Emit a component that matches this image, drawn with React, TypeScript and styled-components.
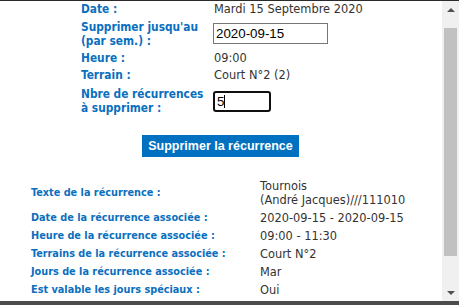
import styled, { createGlobalStyle } from 'styled-components';

const GlobalStyle = createGlobalStyle`
  html, body {
    margin: 0;
    padding: 0;
    background: #ffffff;
  }
`;

type DetailType = {
  label: string;
  value: string[];
};

const DETAILS: DetailType[] = [
  { label: 'Texte de la récurrence :', value: ['Tournois', '(André Jacques)///111010'] },
  { label: 'Date de la récurrence associée :', value: ['2020-09-15 - 2020-09-15'] },
  { label: 'Heure de la récurrence associée :', value: ['09:00 - 11:30'] },
  { label: 'Terrains de la récurrence associée :', value: ['Court N°2'] },
  { label: 'Jours de la récurrence associée :', value: ['Mar'] },
  { label: 'Est valable les jours spéciaux :', value: ['Oui'] },
];

export default function App() {
  return (
    <>
      <GlobalStyle />
      <Frame>
        <Body>
          <Content>
            <FormRow $height={15}>
              <Label>Date :</Label>
              <Value>Mardi 15 Septembre 2020</Value>
            </FormRow>

            <FormRow $height={35}>
              <Label>
                Supprimer jusqu'au
                <br />
                (par sem.) :
              </Label>
              <DateInput defaultValue="2020-09-15" />
            </FormRow>

            <FormRow $height={14}>
              <Label>Heure :</Label>
              <Value>09:00</Value>
            </FormRow>

            <FormRow $height={20}>
              <Label>Terrain :</Label>
              <Value>Court N°2 (2)</Value>
            </FormRow>

            <FormRow $height={32}>
              <Label>
                Nbre de récurrences
                <br />
                à supprimer :
              </Label>
              <CountWrap>
                <CountInput defaultValue="5" />
                <Caret />
              </CountWrap>
            </FormRow>

            <ButtonRow>
              <DeleteButton type="button">Supprimer la récurrence</DeleteButton>
            </ButtonRow>

            <DetailList>
              {DETAILS.map((d) => (
                <DetailRow key={d.label}>
                  <DetailLabel>{d.label}</DetailLabel>
                  <Value>
                    {d.value.map((line) => (
                      <div key={line}>{line}</div>
                    ))}
                  </Value>
                </DetailRow>
              ))}
            </DetailList>
          </Content>

          <Scrollbar>
            <Arrow $up />
            <Track>
              <Thumb />
            </Track>
            <Arrow />
          </Scrollbar>
        </Body>
        <BottomBar />
      </Frame>
    </>
  );
}

const Frame = styled.div`
  width: 459px;
  height: 305px;
  display: flex;
  flex-direction: column;
  border-top: 1px solid #2b2b2b;
  box-sizing: border-box;
  overflow: hidden;
`;

const Body = styled.div`
  flex: 1;
  display: flex;
  min-height: 0;
`;

const Content = styled.div`
  flex: 1;
  overflow: hidden;
  font-family: 'DejaVu Sans', Verdana, sans-serif;
  font-size: 11.4px;
  color: #333333;
`;

const FormRow = styled.div<{ $height: number }>`
  display: grid;
  grid-template-columns: 133px auto;
  align-items: center;
  height: ${(p) => p.$height}px;
  margin-left: 81px;
`;

const Label = styled.div`
  font-family: 'DejaVu Sans Condensed', 'DejaVu Sans', sans-serif;
  font-weight: bold;
  font-size: 11.8px;
  line-height: 14px;
  color: #0a6fbe;
  white-space: nowrap;
`;

const Value = styled.div`
  line-height: 14px;
  white-space: nowrap;
`;

const DateInput = styled.input`
  box-sizing: border-box;
  width: 115px;
  height: 21px;
  margin: 0 0 0 -1px;
  padding: 1px 2px;
  border: 1px solid #767676;
  border-radius: 0;
  font-family: 'Liberation Sans', Arial, sans-serif;
  font-size: 13.33px;
  color: #000000;
  outline: none;
`;

const CountWrap = styled.div`
  position: relative;
  display: flex;
`;

const CountInput = styled.input`
  box-sizing: border-box;
  width: 58px;
  height: 21px;
  margin: 0 0 0 -1px;
  padding: 1px 2px;
  border: 2px solid #101010;
  border-radius: 3px;
  font-family: 'Liberation Sans', Arial, sans-serif;
  font-size: 13.33px;
  color: #000000;
  outline: none;
`;

const Caret = styled.span`
  position: absolute;
  left: 10px;
  top: 4px;
  width: 1px;
  height: 13px;
  background: #000000;
`;

const ButtonRow = styled.div`
  display: flex;
  justify-content: center;
  margin-top: 18px;
`;

const DeleteButton = styled.button`
  height: 22px;
  padding: 0 6px;
  margin-left: -1px;
  border: none;
  background: #0070c0;
  color: #ffffff;
  font-family: 'Liberation Sans', Arial, sans-serif;
  font-weight: bold;
  font-size: 12.5px;
  cursor: pointer;
`;

const DetailList = styled.div`
  display: flex;
  flex-direction: column;
  gap: 4px;
  margin: 22px 0 0 31px;
`;

const DetailRow = styled.div`
  display: grid;
  grid-template-columns: 229px auto;
  align-items: center;
`;

const DetailLabel = styled(Label)`
  font-size: 10.8px;
`;

const Scrollbar = styled.div`
  width: 17px;
  flex: none;
  display: flex;
  flex-direction: column;
  background: #f0f0f0;
`;

const Arrow = styled.div<{ $up?: boolean }>`
  height: 17px;
  flex: none;
  display: flex;
  align-items: center;
  justify-content: center;

  &::before {
    content: '';
    border-left: 4px solid transparent;
    border-right: 4px solid transparent;
    ${(p) => (p.$up ? 'border-bottom: 4px solid #505050;' : 'border-top: 4px solid #505050;')}
  }
`;

const Track = styled.div`
  flex: 1;
  padding: 10px 2px 0 2px;
`;

const Thumb = styled.div`
  height: 228px;
  background: #c1c1c1;
`;

const BottomBar = styled.div`
  height: 4px;
  flex: none;
  background: #4c4c4c;
`;
